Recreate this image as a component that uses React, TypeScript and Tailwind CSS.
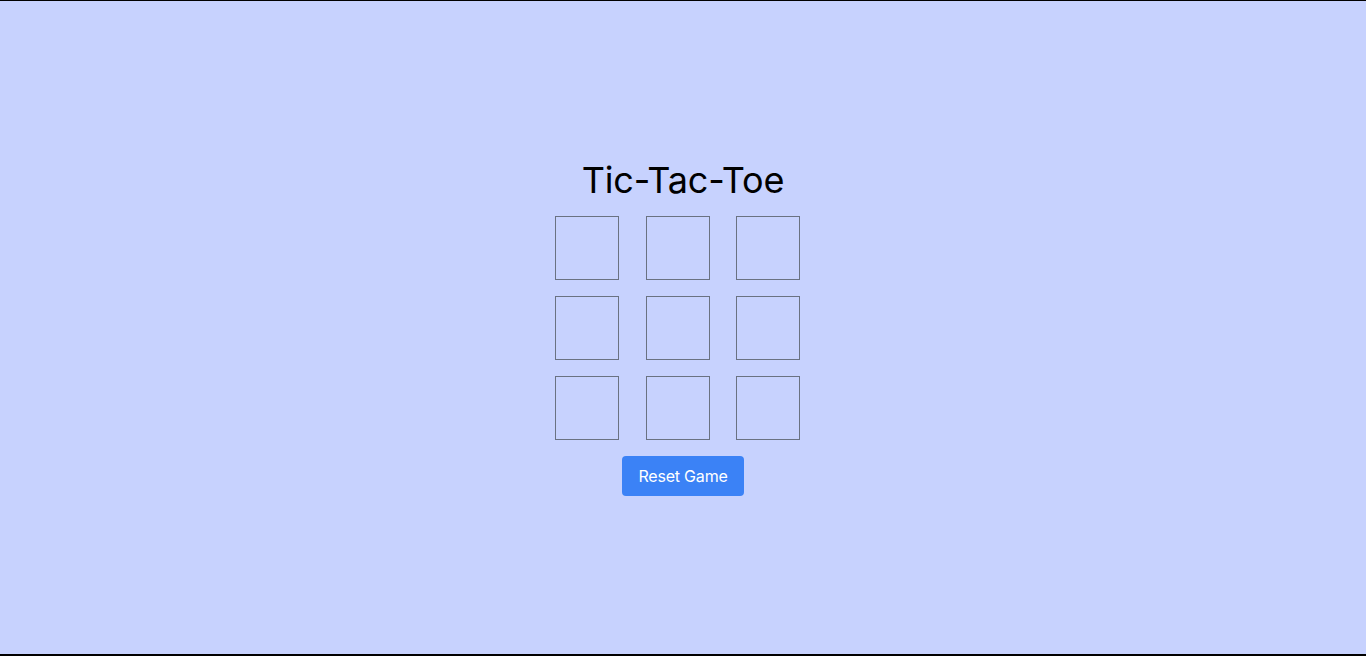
export default function App() {
  const cells = Array.from({ length: 9 }, (_, i) => i);
  return (
    <div
      className="min-h-screen flex flex-col items-center justify-center gap-4 bg-[#c7d2fe] border-t border-b-2 border-black"
      style={{ fontFamily: "Inter, 'Noto Sans', sans-serif" }}
    >
      <h1 className="text-4xl text-black tracking-[-0.2px]">Tic-Tac-Toe</h1>
      <div className="grid grid-cols-3 gap-4 w-64">
        {cells.map((i) => (
          <button key={i} className="w-16 h-16 border border-gray-500" />
        ))}
      </div>
      <button className="px-4 h-10 whitespace-nowrap bg-[#3b82f6] text-white text-base tracking-[-0.2px] rounded">
        Reset Game
      </button>
    </div>
  );
}
